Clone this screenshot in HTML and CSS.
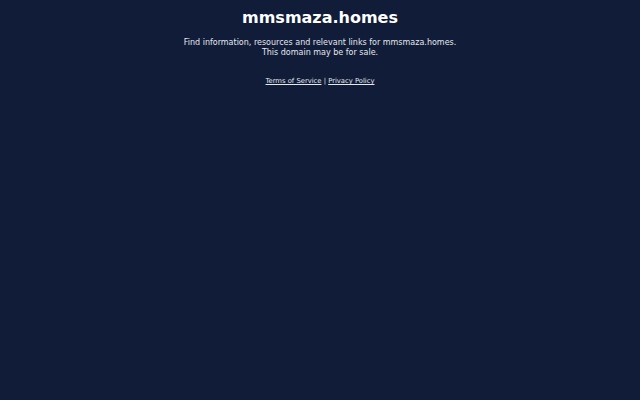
FILE: index.html
```html
<!DOCTYPE html>
<html>
<head>
<meta charset="utf-8">
<link rel="stylesheet" href="styles.css">
</head>
<body>
<div class="wrap">
  <h1 class="title">mmsmaza.homes</h1>
  <p class="desc">Find information, resources and relevant links for mmsmaza.homes.<br>This domain may be for sale.</p>
  <div class="links"><a href="#">Terms of Service</a> | <a href="#">Privacy Policy</a></div>
</div>
</body>
</html>
```

FILE: styles.css
```css
html, body {
  margin: 0;
  padding: 0;
  background: #101c38;
  height: 100%;
}
body {
  font-family: "DejaVu Sans", sans-serif;
  color: #ffffff;
}
.wrap {
  display: flex;
  flex-direction: column;
  align-items: center;
  text-align: center;
  padding-top: 8px;
}
.title {
  font-size: 16px;
  font-weight: bold;
  margin: 0;
  line-height: 20px;
}
.desc {
  font-size: 8px;
  line-height: 9.5px;
  margin: 10px 0 0 0;
  color: #e6e8ee;
}
.links {
  font-size: 6.8px;
  margin-top: 20px;
  color: #e6e8ee;
}
.links a {
  color: #e6e8ee;
}
```
